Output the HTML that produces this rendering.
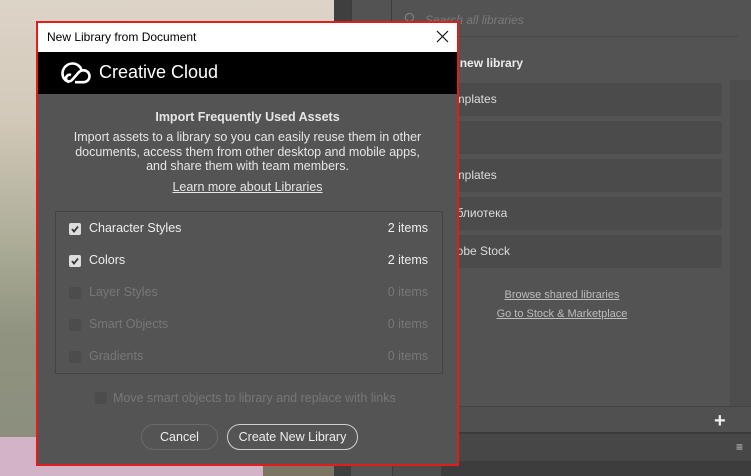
<!DOCTYPE html>
<html><head><meta charset="utf-8"><style>
*{margin:0;padding:0;box-sizing:border-box}
body{width:751px;height:476px;overflow:hidden;position:relative;font-family:"Liberation Sans",sans-serif;background:#535353}
.abs{position:absolute}
.photo{left:0;top:0;width:334px;height:476px;background:linear-gradient(180deg,#dcd4c7 0%,#d2c9b9 25%,#aeae99 50%,#8f937f 70%,#8c8f7e 90%)}
.pink{left:0;top:437px;width:263px;height:39px;background:#d2b3c7}
.brown{left:263px;top:437px;width:71px;height:39px;background:#7d7564}
.panel{left:334px;top:0;width:417px;height:476px;background:#535353}
.row{left:400px;width:322px;height:33px;background:#4b4b4b;border-radius:3px;color:#ddd;font-size:12px;padding:9px 0 0 42px}
.dlg{left:36px;top:21px;width:423px;height:445px;border:2px solid #e21b1b;background:#545454}
.title{height:29px;background:#fff;font-size:12px;color:#000;padding:7px 0 0 9px;position:relative}
.hdr{height:42px;background:#000;color:#fff;font-size:18px;padding:10px 0 0 61px;position:relative}
.cb{width:12px;height:12px;border-radius:2px;position:absolute;left:13px}
.item{position:absolute;left:0;width:386px;font-size:12.5px;height:20px}
.item span{position:absolute;left:33px;top:0}
.item b{position:absolute;right:14px;top:0;font-weight:normal}
.btn{position:absolute;top:401px;height:26px;border-radius:13px;font-size:12.5px;color:#eee;text-align:center;padding-top:5px}
</style></head><body>
<div class="abs photo"></div>
<div class="abs pink"></div><div class="abs brown"></div>
<div class="abs panel"></div>
<div class="abs" style="left:334px;top:0;width:17px;height:476px;background:#3f3f3f"></div>
<div class="abs" style="left:351px;top:0;width:41px;height:460px;border-right:1px solid #3c3c3c;border-left:1px solid #3c3c3c;background:#535353"></div>
<div class="abs" style="left:405px;top:13px;width:9px;height:9px;border:1.5px solid #888;border-radius:50%"></div>
<div class="abs" style="left:425px;top:13px;font-size:12px;color:#7a7a7a;font-style:italic">Search all libraries</div>
<div class="abs" style="left:395px;top:36px;width:343px;height:1px;background:#474747"></div>
<div class="abs" style="left:419px;top:56px;font-size:12px;color:#ececec;font-weight:bold">Create new library</div>
<div class="abs" style="left:730px;top:80px;width:21px;height:327px;background:#4d4d4d"></div>
<div class="abs row" style="top:83px">Templates</div>
<div class="abs row" style="top:121px"></div>
<div class="abs row" style="top:159px">Templates</div>
<div class="abs row" style="top:197px">Библиотека</div>
<div class="abs row" style="top:235px">Adobe Stock</div>
<div class="abs" style="left:462px;top:289px;width:200px;text-align:center;font-size:11px;color:#bdbdbd;text-decoration:underline">Browse shared libraries</div>
<div class="abs" style="left:462px;top:308px;width:200px;text-align:center;font-size:11px;color:#bdbdbd;text-decoration:underline">Go to Stock &amp; Marketplace</div>
<div class="abs" style="left:392px;top:406px;width:359px;height:26px;background:#505050;border-top:1px solid #444"></div>
<div class="abs" style="left:714px;top:410px;font-size:20px;color:#eee;font-weight:bold">+</div>
<div class="abs" style="left:392px;top:432px;width:359px;height:29px;background:#474747;border-top:2px solid #3a3a3a"></div>
<div class="abs" style="left:736px;top:440px;font-size:12px;color:#ccc">≡</div>
<div class="abs" style="left:392px;top:461px;width:359px;height:15px;background:#3d3d3d"></div>
<div class="abs" style="left:393px;top:465px;width:48px;height:11px;background:#4d4d4d"></div>

<div class="abs dlg">
 <div class="title">New Library from Document
  <svg style="position:absolute;right:8px;top:7px" width="13" height="13" viewBox="0 0 13 13"><path d="M1 1L12 12M12 1L1 12" stroke="#111" stroke-width="1.2"/></svg>
 </div>
 <div class="hdr">
  <svg style="position:absolute;left:22px;top:9px" width="32" height="24" viewBox="0 0 32 24"><path d="M9 21C5 20 2.5 16.5 2.5 12.5C2.5 7 7 2.5 12.5 2.5C17 2.5 20.5 5.5 21.5 9" fill="none" stroke="#fff" stroke-width="2.6"/><path d="M15 21.2L23.5 21.2C27 21.2 29.5 18.5 29.5 15.3C29.5 12 27 9.3 23.5 9.3C20 9.3 18.5 11.5 16 14.5L12 19C10 21 6.5 21 6 18C5.7 15 8.5 13 11 14" fill="none" stroke="#fff" stroke-width="2.6"/></svg>
  Creative Cloud</div>
 <div style="position:absolute;top:87px;left:0;width:419px;text-align:center;font-size:12.5px;font-weight:bold;color:#e6e6e6">Import Frequently Used Assets</div>
 <div style="position:absolute;top:107px;left:0;width:419px;text-align:center;font-size:12.5px;line-height:14.5px;color:#e6e6e6">Import assets to a library so you can easily reuse them in other<br>documents, access them from other desktop and mobile apps,<br>and share them with team members.</div>
 <div style="position:absolute;top:157px;left:0;width:419px;text-align:center;font-size:12.5px;color:#e6e6e6;text-decoration:underline">Learn more about Libraries</div>
 <div style="position:absolute;left:17px;top:188px;width:388px;height:163px;border:1px solid #444">
  <div class="item" style="top:9px;color:#eee"><div class="cb" style="top:2px;background:#ddd"><svg width="12" height="12"><path d="M3 6L5 8.5L9 3.5" stroke="#333" stroke-width="1.8" fill="none"/></svg></div><span>Character Styles</span><b>2 items</b></div>
  <div class="item" style="top:41px;color:#eee"><div class="cb" style="top:2px;background:#ddd"><svg width="12" height="12"><path d="M3 6L5 8.5L9 3.5" stroke="#333" stroke-width="1.8" fill="none"/></svg></div><span>Colors</span><b>2 items</b></div>
  <div class="item" style="top:73px;color:#777"><div class="cb" style="top:2px;background:#4c4c4c"></div><span>Layer Styles</span><b>0 items</b></div>
  <div class="item" style="top:105px;color:#777"><div class="cb" style="top:2px;background:#4c4c4c"></div><span>Smart Objects</span><b>0 items</b></div>
  <div class="item" style="top:137px;color:#777"><div class="cb" style="top:2px;background:#4c4c4c"></div><span>Gradients</span><b>0 items</b></div>
 </div>
 <div style="position:absolute;left:57px;top:369px;width:12px;height:12px;background:#4c4c4c;border-radius:2px"></div>
 <div style="position:absolute;left:75px;top:368px;font-size:12.5px;color:#777">Move smart objects to library and replace with links</div>
 <div class="btn" style="left:103px;width:77px;border:1px solid #6a6a6a">Cancel</div>
 <div class="btn" style="left:189px;width:131px;border:1.5px solid #cfcfcf">Create New Library</div>
</div>
</body></html>
